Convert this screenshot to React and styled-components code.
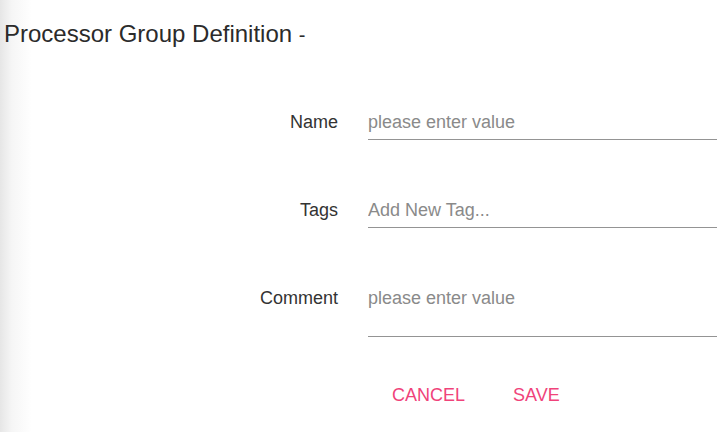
import React from 'react';
import styled, { createGlobalStyle } from 'styled-components';

// //////////////// GLOBAL //////////////// //
const GlobalStyle = createGlobalStyle`
  html, body {
    margin: 0;
    padding: 0;
    background: #fff;
    font-family: "Liberation Sans", Arial, sans-serif;
  }
`;

// //////////////// STYLED COMPONENTS //////////////// //
const Page = styled.div`
  min-height: 100vh;
  box-sizing: border-box;
  background: linear-gradient(to right, #e6e6e6 0, #f6f6f6 12px, #fff 32px);
  overflow: hidden;
`;

const Title = styled.h2`
  margin: 0;
  padding: 20px 0 0 4px;
  height: 28px;
  font-size: 24px;
  font-weight: 400;
  line-height: 28px;
  color: #2b2b2b;
`;

const TitleSuffix = styled.span`
  font-size: 20px;
  line-height: 1;
`;

const Form = styled.form`
  display: grid;
  grid-template-columns: 338px 1fr;
  column-gap: 30px;
  row-gap: 56px;
  margin-top: 60px;
`;

const Label = styled.label`
  justify-self: end;
  align-self: start;
  padding-top: 4px;
  font-size: 18px;
  line-height: 20px;
  color: #333;
`;

const fieldStyles = `
  display: block;
  width: 100%;
  box-sizing: border-box;
  border: none;
  border-bottom: 1px solid #949494;
  outline: none;
  background: transparent;
  font-family: "Liberation Sans", Arial, sans-serif;
  font-size: 18px;
  line-height: 20px;
  color: #333;
  padding: 4px 0 7px;
  &::placeholder {
    color: #8a8a8a;
  }
`;

const Input = styled.input`
  ${fieldStyles}
`;

const TextArea = styled.textarea`
  ${fieldStyles}
  height: 53px;
  resize: none;
`;

const Actions = styled.div`
  grid-column: 2;
  display: flex;
  margin-top: -16px;
`;

const Button = styled.button`
  height: 36px;
  padding: 0 24px;
  border: none;
  background: transparent;
  font-family: "Liberation Sans", Arial, sans-serif;
  font-size: 18px;
  color: #f0437a;
  text-transform: uppercase;
  cursor: pointer;
`;

// //////////////// MAIN COMPONENT //////////////// //
const App = () => (
  <Page>
    <GlobalStyle />
    <Title>
      Processor Group Definition <TitleSuffix>-</TitleSuffix>
    </Title>
    <Form onSubmit={(e) => e.preventDefault()}>
      <Label htmlFor="name">Name</Label>
      <Input id="name" placeholder="please enter value" />
      <Label htmlFor="tags">Tags</Label>
      <Input id="tags" placeholder="Add New Tag..." />
      <Label htmlFor="comment">Comment</Label>
      <TextArea id="comment" placeholder="please enter value" />
      <Actions>
        <Button type="button">Cancel</Button>
        <Button type="submit">Save</Button>
      </Actions>
    </Form>
  </Page>
);

export default App;
